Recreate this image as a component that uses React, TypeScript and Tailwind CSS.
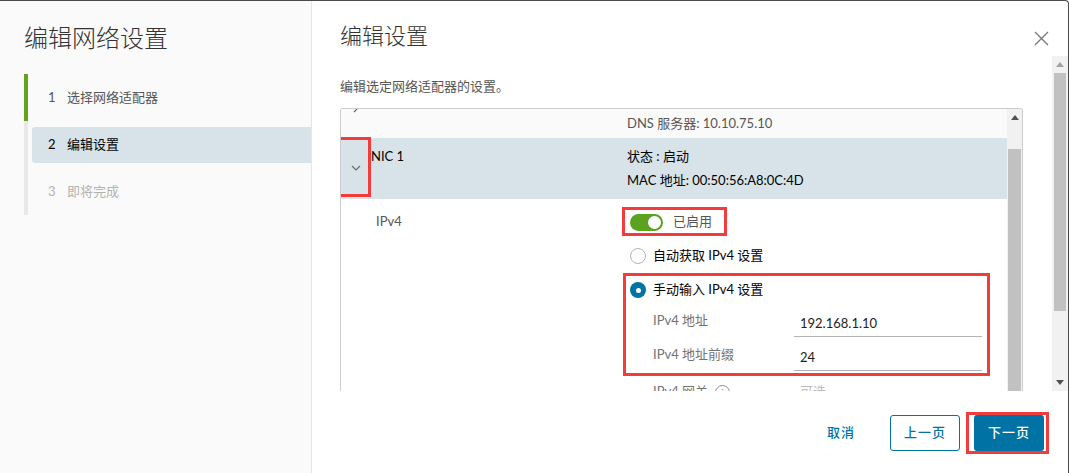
import React from "react";

const FONT = "font-['Lato','Noto_Sans_CJK_SC',sans-serif]";

function Chevron({ dir }: { dir: "down" | "right" }) {
  return dir === "down" ? (
    <svg width="10" height="6" viewBox="0 0 10 6" fill="none">
      <path d="M1 1 L5 5 L9 1" stroke="#6a6a6a" strokeWidth="1.2" />
    </svg>
  ) : (
    <svg width="8" height="12" viewBox="0 0 8 12" fill="none">
      <path d="M1 1 L6 6 L1 11" stroke="#6a6a6a" strokeWidth="1.2" />
    </svg>
  );
}

function Arrow({ up, color }: { up?: boolean; color: string }) {
  return (
    <svg width="8" height="5" viewBox="0 0 8 5">
      <path d={up ? "M0 5 L4 0 L8 5 Z" : "M0 0 L4 5 L8 0 Z"} fill={color} />
    </svg>
  );
}

function Steps() {
  return (
    <div className="ml-6 mt-[21px] flex flex-col text-[13px]">
      <div className="flex h-[47px] items-center border-l-4 border-[#62a420]">
        <div className="ml-1 flex pl-4 text-[#565656]">
          <span className="w-[19px]">1</span>
          <span>选择网络适配器</span>
        </div>
      </div>
      <div className="flex h-[47px] items-center border-l-4 border-[#e8e8e8]">
        <div className="ml-1 flex h-[36px] flex-1 items-center rounded-l-[3px] bg-[#d8e3e9] pl-4 text-[#000]">
          <span className="w-[19px]">2</span>
          <span>编辑设置</span>
        </div>
      </div>
      <div className="flex h-[47px] items-center border-l-4 border-[#e8e8e8]">
        <div className="ml-1 flex pl-4 text-[#b3b3b3]">
          <span className="w-[19px]">3</span>
          <span>即将完成</span>
        </div>
      </div>
    </div>
  );
}

function FieldRow({ label, value }: { label: string; value: string }) {
  return (
    <div className="flex h-[34px] shrink-0 items-center">
      <span className="w-[141px] pb-[6px] text-[#737373]">{label}</span>
      <div className="flex h-[25px] w-[188px] items-center border-b border-[#b3b3b3] pl-[6px] text-[#222]">
        {value}
      </div>
    </div>
  );
}

function NicBox() {
  return (
    <div className="flex min-h-0 flex-1 overflow-hidden rounded-t-[3px] border border-b-0 border-[#cccccc]">
      <div className="flex flex-1 flex-col text-[13px]">
        {/* previous adapter, scrolled mostly out */}
        <div className="flex h-[29px] shrink-0 bg-[#fafafa]">
          <div className="-mt-[8px] w-[30px] pl-[12px]">
            <Chevron dir="right" />
          </div>
          <div className="w-[256px]" />
          <div className="flex items-center text-[#565656]">DNS 服务器: 10.10.75.10</div>
        </div>

        <div className="relative flex h-[61px] shrink-0 bg-[#d8e3e9]">
          <div className="flex w-[30px] justify-center pt-[27px]">
            <Chevron dir="down" />
          </div>
          <div className="w-[256px] pt-[6px] leading-[24px] text-black">NIC 1</div>
          <div className="pt-[6px] leading-[24px] text-black">
            <div>状态 : 启动</div>
            <div>MAC 地址: 00:50:56:A8:0C:4D</div>
          </div>
          <div className="pointer-events-none absolute left-[-3px] top-[-1px] h-[60px] w-[33px] border-[3px] border-[#f23b3b]" />
        </div>

        <div className="flex shrink-0">
          <div className="w-[30px]" />
          <div className="w-[256px] pl-[5px] pt-[13px] text-[#565656]">IPv4</div>
          <div className="relative flex flex-col pt-[6px]">
            <div className="relative flex h-[34px] items-center pl-[3px]">
              <div className="relative h-[17px] w-[33px] rounded-full bg-[#5aa220]">
                <div className="absolute right-[2px] top-[2px] h-[13px] w-[13px] rounded-full bg-white" />
              </div>
              <span className="ml-[10px] text-[#565656]">已启用</span>
              <div className="pointer-events-none absolute left-[-5px] top-[2px] h-[29px] w-[105px] border-[3px] border-[#f23b3b]" />
            </div>
            <div className="flex h-[34px] items-center pl-[3px] text-black">
              <div className="mr-[7px] h-[16px] w-[16px] rounded-full border border-[#b3b3b3] bg-white" />
              自动获取 IPv4 设置
            </div>
            <div className="relative pl-[3px]">
              <div className="flex h-[34px] items-center text-black">
                <div className="mr-[7px] flex h-[16px] w-[16px] items-center justify-center rounded-full bg-[#0072a3]">
                  <div className="h-[5px] w-[5px] rounded-full bg-white" />
                </div>
                手动输入 IPv4 设置
              </div>
              <div className="pl-[23px]">
                <FieldRow label="IPv4 地址" value="192.168.1.10" />
                <FieldRow label="IPv4 地址前缀" value="24" />
              </div>
              <div className="pointer-events-none absolute left-[-4px] top-0 h-[103px] w-[367px] border-[3px] border-[#f23b3b]" />
            </div>
            <div className="flex h-[34px] items-center pl-[26px]">
              <span className="flex w-[141px] items-center text-[#737373]">
                IPv4 网关
                <span className="ml-[7px] flex h-[15px] w-[15px] items-center justify-center rounded-full border border-[#8c8c8c] text-[10px] leading-none text-[#8c8c8c]">
                  i
                </span>
              </span>
              <span className="pl-[6px] text-[#bbbbbb]">可选</span>
            </div>
          </div>
        </div>
      </div>

      {/* inner scrollbar */}
      <div className="flex w-[15px] shrink-0 flex-col bg-[#f1f1f1]">
        <div className="flex h-[17px] shrink-0 items-center justify-center">
          <Arrow up color="#505050" />
        </div>
        <div className="h-[23px] shrink-0" />
        <div className="mx-[1px] flex-1 bg-[#c1c1c1]" />
      </div>
    </div>
  );
}

export default function App() {
  return (
    <div className={`flex h-[473px] w-[1069px] overflow-hidden rounded-tr-[4px] border-r border-t border-[#4a4a4a] bg-white ${FONT}`}>
      <aside className="w-[312px] shrink-0 border-r border-[#e6e6e6] bg-[#fafafa]">
        <h1 className="pl-6 pt-[22px] text-[24px] font-light leading-[30px] text-[#333]">编辑网络设置</h1>
        <Steps />
      </aside>

      <main className="flex min-w-0 flex-1 flex-col">
        <header className="flex h-[55px] shrink-0 items-start justify-between pl-[28px] pr-[19px] pt-[21px]">
          <h2 className="text-[22px] font-light leading-[28px] text-[#333]">编辑设置</h2>
          <button className="mt-[9px]" aria-label="Close">
            <svg width="15" height="15" viewBox="0 0 15 15">
              <path d="M1 1 L14 14 M14 1 L1 14" stroke="#777" strokeWidth="1.3" />
            </svg>
          </button>
        </header>

        <div className="flex h-[335px] shrink-0">
          <div className="flex min-w-0 flex-1 flex-col pl-[28px] pr-[29px]">
            <p className="mb-[12px] shrink-0 pt-[20px] text-[13px] leading-[20px] text-[#565656]">编辑选定网络适配器的设置。</p>
            <NicBox />
          </div>
          {/* outer scrollbar */}
          <div className="flex w-[16px] flex-col bg-[#f1f1f1]">
            <div className="flex h-[17px] items-center justify-center">
              <Arrow up color="#a3a3a3" />
            </div>
            <div className="mx-[2px] h-[238px] bg-[#c1c1c1]" />
            <div className="flex-1" />
            <div className="flex h-[17px] items-center justify-center">
              <Arrow color="#505050" />
            </div>
          </div>
        </div>

        <footer className="flex flex-1 items-start justify-end gap-[14px] pr-[24px] pt-[24px] text-[13px]">
          <button className="h-[36px] w-[70px] font-medium tracking-[1px] text-[#0072a3]">取消</button>
          <button className="h-[36px] w-[70px] rounded-[3px] border border-[#0072a3] font-medium tracking-[1px] text-[#0072a3]">
            上一页
          </button>
          <div className="relative">
            <button className="h-[36px] w-[70px] rounded-[3px] bg-[#0072a3] font-medium tracking-[1px] text-white">下一页</button>
            <div className="pointer-events-none absolute left-[-8px] top-[-3px] h-[42px] w-[83px] border-[3px] border-[#f23b3b]" />
          </div>
        </footer>
      </main>
    </div>
  );
}
